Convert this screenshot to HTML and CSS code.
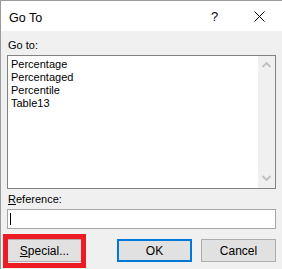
FILE: index.html
```html
<!DOCTYPE html>
<html>
<head>
<meta charset="utf-8">
<link rel="stylesheet" href="styles.css">
</head>
<body>
<div class="window">
  <div class="titlebar">
    <span class="title">Go To</span>
    <span class="help">?</span>
    <span class="close">
      <svg width="11" height="11" viewBox="0 0 11 11"><path d="M0.5 0.5 L10.5 10.5 M10.5 0.5 L0.5 10.5" stroke="#000" stroke-width="1" fill="none"/></svg>
    </span>
  </div>
  <div class="content">
    <div class="label label-goto">Go to:</div>
    <div class="listbox">
      <ul class="items">
        <li>Percentage</li>
        <li>Percentaged</li>
        <li>Percentile</li>
        <li>Table13</li>
      </ul>
      <div class="scrollbar">
        <svg class="arrow" width="9" height="6" viewBox="0 0 9 6"><path d="M0.5 5 L4.5 1 L8.5 5" stroke="#c2c2c2" stroke-width="2" fill="none"/></svg>
        <svg class="arrow" width="9" height="6" viewBox="0 0 9 6"><path d="M0.5 1 L4.5 5 L8.5 1" stroke="#c2c2c2" stroke-width="2" fill="none"/></svg>
      </div>
    </div>
    <div class="label label-ref"><u>R</u>eference:</div>
    <div class="input"><span class="caret"></span></div>
    <div class="buttons">
      <div class="btn btn-special"><u>S</u>pecial...
        <span class="highlight"></span>
      </div>
      <div class="btn btn-ok">OK</div>
      <div class="btn btn-cancel">Cancel</div>
    </div>
  </div>
</div>
</body>
</html>
```
FILE: styles.css
```css
html, body {
  margin: 0;
  padding: 0;
}
body {
  width: 282px;
  height: 269px;
  overflow: hidden;
  font-family: "Liberation Sans", Arial, sans-serif;
  font-size: 11px;
  color: #000;
  background: #f0f0f0;
}
.window {
  width: 282px;
  height: 269px;
  box-sizing: border-box;
  border-top: 1px solid #9a9a9a;
  border-left: 1px solid #9a9a9a;
  background: #f0f0f0;
}
.titlebar {
  height: 30px;
  background: #fff;
  display: flex;
  align-items: center;
  position: relative;
}
.title {
  font-size: 12.5px;
  margin-left: 8px;
  margin-top: 4px;
}
.help {
  position: absolute;
  left: 210px;
  top: 8px;
  font-size: 13px;
}
.close {
  position: absolute;
  left: 253px;
  top: 10px;
  width: 11px;
  height: 11px;
  display: block;
}
.close svg { display: block; }
.content {
  padding-left: 6px;
}
.label {
  line-height: 13px;
  height: 13px;
}
.label-goto {
  margin-top: 8px;
  margin-left: 1px;
}
.listbox {
  margin-top: 3px;
  width: 269px;
  height: 134px;
  box-sizing: border-box;
  border: 1px solid #828282;
  background: #fff;
  display: flex;
}
.items {
  list-style: none;
  margin: 0;
  padding: 2px 0 0 3px;
  flex: 1;
}
.items li {
  line-height: 13px;
  height: 13px;
}
.scrollbar {
  width: 17px;
  background: #f0f0f0;
  display: flex;
  flex-direction: column;
  justify-content: space-between;
  align-items: center;
  padding: 6px 0 7px;
}
.arrow { display: block; }
.label-ref {
  margin-top: 4px;
  margin-left: 1px;
}
.input {
  margin-top: 3px;
  width: 269px;
  height: 20px;
  box-sizing: border-box;
  border: 1px solid #a5a5a5;
  background: #fff;
  position: relative;
}
.caret {
  position: absolute;
  left: 2px;
  top: 3px;
  width: 1px;
  height: 12px;
  background: #000;
}
.buttons {
  margin-top: 10px;
  display: flex;
  width: 269px;
}
.btn {
  width: 75px;
  height: 23px;
  box-sizing: border-box;
  border: 1px solid #adadad;
  background: #e1e1e1;
  display: flex;
  align-items: center;
  justify-content: center;
  font-size: 12px;
  position: relative;
}
.btn-ok {
  margin-left: 35px;
  border: 2px solid #0078d7;
}
.btn-cancel {
  margin-left: 9px;
}
.highlight {
  position: absolute;
  left: -5px;
  top: -6px;
  width: 83px;
  height: 34px;
  box-sizing: border-box;
  border: 5px solid #ed1c24;
}
```
